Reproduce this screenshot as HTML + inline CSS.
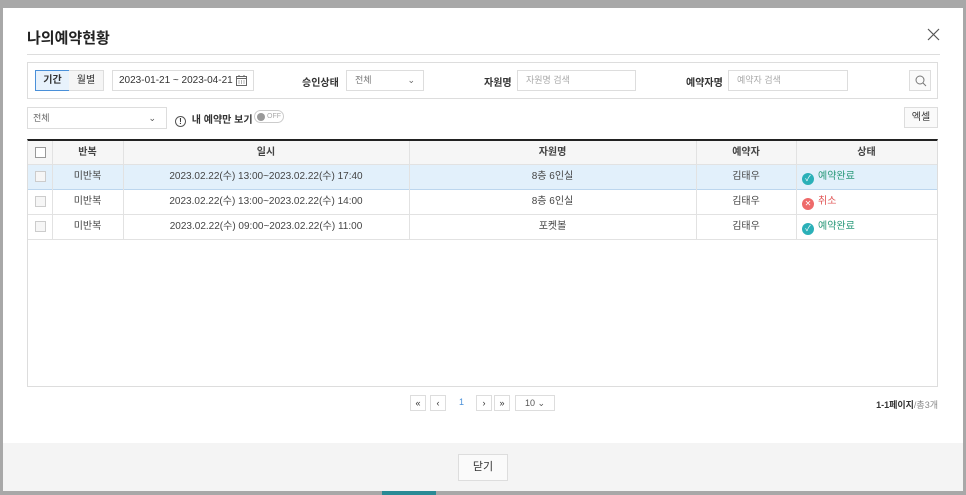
<!DOCTYPE html>
<html><head><meta charset="utf-8"><style>
*{box-sizing:border-box;margin:0;padding:0}
body{width:966px;height:495px;background:#a8a8a8;position:relative;overflow:hidden;font-family:"Liberation Sans","Noto Sans CJK KR",sans-serif;font-size:10px;color:#333}
.a{position:absolute}
.m{left:3px;top:8px;width:960px;height:483px;background:#fff}
.ft{left:3px;top:443px;width:960px;height:48px;background:#f4f4f4}
.bx{border:1px solid #ddd;background:#fff}
.lbl{font-weight:bold;font-size:10px;color:#333}
.ph{color:#aaa;font-size:9px;padding-left:8px;line-height:19px}
.tbl{left:27px;top:139px;width:911px;height:248px;border:1px solid #ddd;border-top:2px solid #222}
.row{position:absolute;left:0;width:909px;height:25px;border-bottom:1px solid #e2e2e2}
.c{position:absolute;top:0;height:100%;text-align:center;line-height:24px;font-size:10px;color:#444}
.vl{position:absolute;top:0;width:1px;height:100%;background:#e2e2e2}
.cb{position:absolute;left:7px;top:6px;width:11px;height:11px;border:1px solid #ccc;background:#f6f6f6}
.pg{top:395px;width:16px;height:16px;border:1px solid #ddd;text-align:center;line-height:14px;font-size:9px;background:#fff}
</style></head><body>
<div class="a" style="left:0;top:0;width:966px;height:8px;background:#a8a8a8"></div>
<div class="a m"></div>
<div class="a ft"></div>
<div class="a" style="left:27px;top:27px;font-size:15px;font-weight:bold;color:#222">나의예약현황</div>
<svg class="a" style="left:927px;top:28px" width="13" height="13"><path d="M1 1L12 12M12 1L1 12" stroke="#555" stroke-width="1.2"/></svg>
<div class="a" style="left:27px;top:54px;width:913px;height:1px;background:#ddd"></div>
<div class="a bx" style="left:27px;top:62px;width:911px;height:37px"></div>
<div class="a" style="left:35px;top:70px;width:35px;height:21px;border:1px solid #4a90d9;background:#e8f2fc;text-align:center;line-height:19px;font-weight:bold;color:#333">기간</div>
<div class="a" style="left:69px;top:70px;width:35px;height:21px;border:1px solid #ddd;border-left:none;background:#f5f5f5;text-align:center;line-height:19px;color:#333">월별</div>
<div class="a bx" style="left:112px;top:70px;width:142px;height:21px;padding-left:6px;line-height:19px;font-size:10px">2023-01-21 ~ 2023-04-21
<svg class="a" style="left:123px;top:4px" width="11" height="11"><rect x="0.5" y="1.5" width="10" height="9" fill="none" stroke="#666"/><path d="M0.5 3.5H10.5M3 0V2M8 0V2M2.5 6h1M5 6h1M7.5 6h1M2.5 8h1M5 8h1M7.5 8h1" stroke="#666"/></svg></div>
<div class="a lbl" style="left:302px;top:74px">승인상태</div>
<div class="a bx ph" style="left:346px;top:70px;width:78px;height:21px;color:#777">전체<span class="a" style="right:8px;top:0;color:#666">⌄</span></div>
<div class="a lbl" style="left:484px;top:74px">자원명</div>
<div class="a bx ph" style="left:517px;top:70px;width:119px;height:21px">자원명 검색</div>
<div class="a lbl" style="left:686px;top:74px">예약자명</div>
<div class="a bx ph" style="left:728px;top:70px;width:120px;height:21px">예약자 검색</div>
<div class="a bx" style="left:909px;top:70px;width:22px;height:21px;background:#fafafa"><svg class="a" style="left:5px;top:4px" width="12" height="12"><circle cx="5" cy="5" r="4" fill="none" stroke="#777"/><path d="M8 8L11 11" stroke="#777"/></svg></div>
<div class="a bx ph" style="left:27px;top:107px;width:140px;height:22px;color:#666;line-height:20px;padding-left:5px">전체<span class="a" style="right:10px;top:0;color:#555">⌄</span></div>
<div class="a" style="left:175px;top:111px;font-weight:bold;font-size:10px;color:#333"><span style="display:inline-block;width:11px;height:11px;border:1px solid #555;border-radius:50%;font-size:8px;text-align:center;line-height:9px;vertical-align:-1px;margin-right:3px">!</span> 내 예약만 보기</div>
<div class="a" style="left:254px;top:110px;width:30px;height:13px;border:1px solid #ccc;border-radius:7px;font-size:7px;color:#aaa;line-height:11px;padding-left:12px">OFF<span class="a" style="left:2px;top:2px;width:8px;height:8px;border-radius:50%;background:#999"></span></div>
<div class="a bx" style="left:904px;top:107px;width:34px;height:21px;text-align:center;line-height:19px;background:#fafafa;color:#333">엑셀</div>
<div class="a tbl">
<div class="row" style="top:0;height:24px;background:#f6f6f6;font-weight:bold"></div>
<div class="row" style="top:24px;background:#e2f0fb;border-bottom-color:#bcd6ee"></div>
<div class="row" style="top:49px"></div>
<div class="row" style="top:74px"></div>
<div class="vl" style="left:24px;height:99px"></div><div class="vl" style="left:95px;height:99px"></div><div class="vl" style="left:381px;height:99px"></div><div class="vl" style="left:668px;height:99px"></div><div class="vl" style="left:768px;height:99px"></div>
<div class="cb" style="background:#fff;border-color:#999"></div>
<div class="c" style="left:24px;width:71px;font-weight:bold">반복</div>
<div class="c" style="left:95px;width:286px;font-weight:bold">일시</div>
<div class="c" style="left:381px;width:287px;font-weight:bold">자원명</div>
<div class="c" style="left:668px;width:100px;font-weight:bold">예약자</div>
<div class="c" style="left:768px;width:141px;font-weight:bold">상태</div>
<div style="position:absolute;top:24px;left:0;width:909px;height:25px"><div class="cb"></div><div class="c" style="left:24px;width:71px">미반복</div><div class="c" style="left:95px;width:286px">2023.02.22(수) 13:00~2023.02.22(수) 17:40</div><div class="c" style="left:381px;width:287px">8층 6인실</div><div class="c" style="left:668px;width:100px">김태우</div><div class="c" style="left:774px;text-align:left;color:#2a9a7a"><span style="display:inline-block;width:12px;height:12px;border-radius:50%;background:#2bb0b8;color:#fff;font-size:8px;line-height:12px;text-align:center;vertical-align:-2px;margin-right:4px">✓</span>예약완료</div></div>
<div style="position:absolute;top:49px;left:0;width:909px;height:25px"><div class="cb"></div><div class="c" style="left:24px;width:71px">미반복</div><div class="c" style="left:95px;width:286px">2023.02.22(수) 13:00~2023.02.22(수) 14:00</div><div class="c" style="left:381px;width:287px">8층 6인실</div><div class="c" style="left:668px;width:100px">김태우</div><div class="c" style="left:774px;text-align:left;color:#e05555"><span style="display:inline-block;width:12px;height:12px;border-radius:50%;background:#ee6a6a;color:#fff;font-size:8px;line-height:12px;text-align:center;vertical-align:-2px;margin-right:4px">✕</span>취소</div></div>
<div style="position:absolute;top:74px;left:0;width:909px;height:25px"><div class="cb"></div><div class="c" style="left:24px;width:71px">미반복</div><div class="c" style="left:95px;width:286px">2023.02.22(수) 09:00~2023.02.22(수) 11:00</div><div class="c" style="left:381px;width:287px">포켓볼</div><div class="c" style="left:668px;width:100px">김태우</div><div class="c" style="left:774px;text-align:left;color:#2a9a7a"><span style="display:inline-block;width:12px;height:12px;border-radius:50%;background:#2bb0b8;color:#fff;font-size:8px;line-height:12px;text-align:center;vertical-align:-2px;margin-right:4px">✓</span>예약완료</div></div>
</div>
<div class="a pg" style="left:410px">«</div>
<div class="a pg" style="left:430px">‹</div>
<div class="a" style="left:459px;top:397px;font-size:9px;color:#4a90d9">1</div>
<div class="a pg" style="left:476px">›</div>
<div class="a pg" style="left:494px">»</div>
<div class="a pg" style="left:515px;width:40px;color:#555">10 ⌄</div>
<div class="a" style="right:28px;top:398px;font-size:9px;font-weight:bold;color:#333">1-1페이지<span style="font-weight:normal;color:#888">/총3개</span></div>
<div class="a bx" style="left:458px;top:454px;width:50px;height:27px;text-align:center;line-height:25px;font-size:11px;background:#fafafa;color:#333">닫기</div>
<div class="a" style="left:382px;top:491px;width:54px;height:4px;background:#2a8a95"></div>
</body></html>
